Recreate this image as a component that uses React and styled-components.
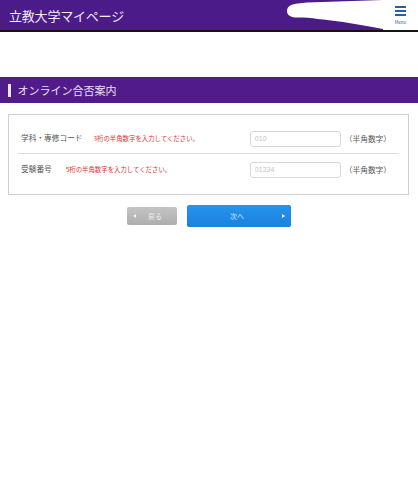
import React from "react";
import styled, { createGlobalStyle } from "styled-components";

const Global = createGlobalStyle`
  html, body { margin: 0; padding: 0; background: #ffffff; }
  body { font-family: "Noto Sans CJK JP", "Noto Sans", sans-serif; }
  * { box-sizing: border-box; }
`;

const Page = styled.div`
  width: 418px;
  min-height: 500px;
  background: #fff;
`;

const Header = styled.header`
  display: flex;
  align-items: stretch;
  height: 32px;
  background: #4b1b89;
  border-bottom: 2px solid #141414;
`;

const Title = styled.h1`
  margin: 0;
  padding-left: 9px;
  display: flex;
  align-items: center;
  font-size: 13px;
  font-weight: 400;
  color: #f1ecf7;
  letter-spacing: -0.2px;
  line-height: 1;
`;

const Scribble = styled.svg`
  margin-left: auto;
  flex: 0 0 100px;
  width: 100px;
  height: 30px;
  display: block;
`;

const MenuButton = styled.button`
  flex: 0 0 35px;
  width: 35px;
  border: none;
  background: #fff;
  padding: 6px 0 0;
  display: flex;
  flex-direction: column;
  align-items: center;
  gap: 3px;
  font-family: inherit;
`;

const MenuBars = styled.span`
  display: flex;
  flex-direction: column;
  gap: 2px;
  span {
    display: block;
    width: 11px;
    height: 2px;
    background: #2a5ea6;
  }
`;

const MenuText = styled.span`
  font-size: 5px;
  color: #2a5ea6;
  line-height: 1;
  transform: scale(0.9);
`;

const SectionBar = styled.h2`
  margin: 45px 0 0;
  height: 26px;
  background: #521b8b;
  display: flex;
  align-items: center;
  padding-left: 8px;
  gap: 7px;
  font-size: 11px;
  font-weight: 400;
  color: #e7e0f0;
  line-height: 1;
  &::before {
    content: "";
    width: 2.5px;
    height: 13px;
    background: #ebe6f2;
  }
`;

const FormBox = styled.div`
  margin: 11px 9px 0 8px;
  border: 1px solid #cfcfcf;
  padding: 9px 9px 9px;
`;

const Row = styled.div`
  display: flex;
  align-items: center;
  height: ${(p) => (p.$last ? "31px" : "30px")};
  padding-left: 3px;
  padding-right: 8px;
  border-bottom: ${(p) => (p.$last ? "none" : "1px solid #dedede")};
`;

const LabelGroup = styled.div`
  flex: 1;
  display: flex;
  align-items: baseline;
  gap: ${(p) => p.$gap}px;
`;

const Label = styled.span`
  font-size: 7.7px;
  color: #555;
  line-height: 1;
`;

const Hint = styled.span`
  font-size: 6.4px;
  color: #e03131;
  line-height: 1;
`;

const Input = styled.input`
  width: 91px;
  height: 16px;
  border: 1px solid #d8d8d8;
  border-radius: 3px;
  padding: 0 4px;
  font-size: 7px;
  font-family: "Liberation Sans", sans-serif;
  color: #333;
  outline: none;
  &::placeholder { color: #c4c4c4; }
`;

const Unit = styled.span`
  margin-left: 4px;
  font-size: 7.7px;
  color: #555;
  line-height: 1;
`;

const Buttons = styled.div`
  display: flex;
  justify-content: center;
  align-items: center;
  gap: 10px;
  margin-top: 10px;
`;

const Btn = styled.button`
  position: relative;
  width: ${(p) => (p.$primary ? "104px" : "50px")};
  height: ${(p) => (p.$primary ? "22px" : "18px")};
  border: none;
  border-radius: 2px;
  background: ${(p) =>
    p.$primary
      ? "linear-gradient(#2594ec, #1a80de)"
      : "linear-gradient(#c4c4c4, #adadad)"};
  color: ${(p) => (p.$primary ? "#d9ecfc" : "#ececec")};
  font-family: inherit;
  font-size: 7px;
  line-height: 1;
  padding: 0;
  display: flex;
  align-items: center;
  justify-content: center;
  padding-left: ${(p) => (p.$primary ? "0" : "6px")};
  padding-right: ${(p) => (p.$primary ? "4px" : "0")};
`;

const Arrow = styled.span`
  position: absolute;
  top: 50%;
  ${(p) => (p.$dir === "left" ? "left: 6px;" : "right: 6px;")}
  transform: translateY(-50%);
  width: 0;
  height: 0;
  border-top: 2.5px solid transparent;
  border-bottom: 2.5px solid transparent;
  ${(p) =>
    p.$dir === "left"
      ? "border-right: 3px solid #f4f4f4;"
      : "border-left: 3px solid #ffffff;"}
`;

const rows = [
  { label: "学科・専修コード", hint: "3桁の半角数字を入力してください。", ph: "010", gap: 11 },
  { label: "受験番号", hint: "5桁の半角数字を入力してください。", ph: "01234", gap: 14 },
];

export default function App() {
  return (
    <Page>
      <Global />
      <Header>
        <Title>立教大学マイページ</Title>
        <Scribble viewBox="0 0 100 30" preserveAspectRatio="none">
          <path
            d="M4 11 C4 6 9 4 15 3.5 L24 2.5 L100 0 L100 29 C88 27 74 24 60 22 L40 19.5 C32 18.5 24 17 17 17.5 C10 18 4 16.5 4 11 Z"
            fill="#ffffff"
          />
        </Scribble>
        <MenuButton>
          <MenuBars>
            <span />
            <span />
            <span />
          </MenuBars>
          <MenuText>Menu</MenuText>
        </MenuButton>
      </Header>

      <SectionBar>オンライン合否案内</SectionBar>

      <FormBox>
        {rows.map((r, i) => (
          <Row key={r.label} $last={i === rows.length - 1}>
            <LabelGroup $gap={r.gap}>
              <Label>{r.label}</Label>
              <Hint>{r.hint}</Hint>
            </LabelGroup>
            <Input placeholder={r.ph} />
            <Unit>（半角数字）</Unit>
          </Row>
        ))}
      </FormBox>

      <Buttons>
        <Btn>
          <Arrow $dir="left" />
          戻る
        </Btn>
        <Btn $primary>
          次へ
          <Arrow $dir="right" />
        </Btn>
      </Buttons>
    </Page>
  );
}
